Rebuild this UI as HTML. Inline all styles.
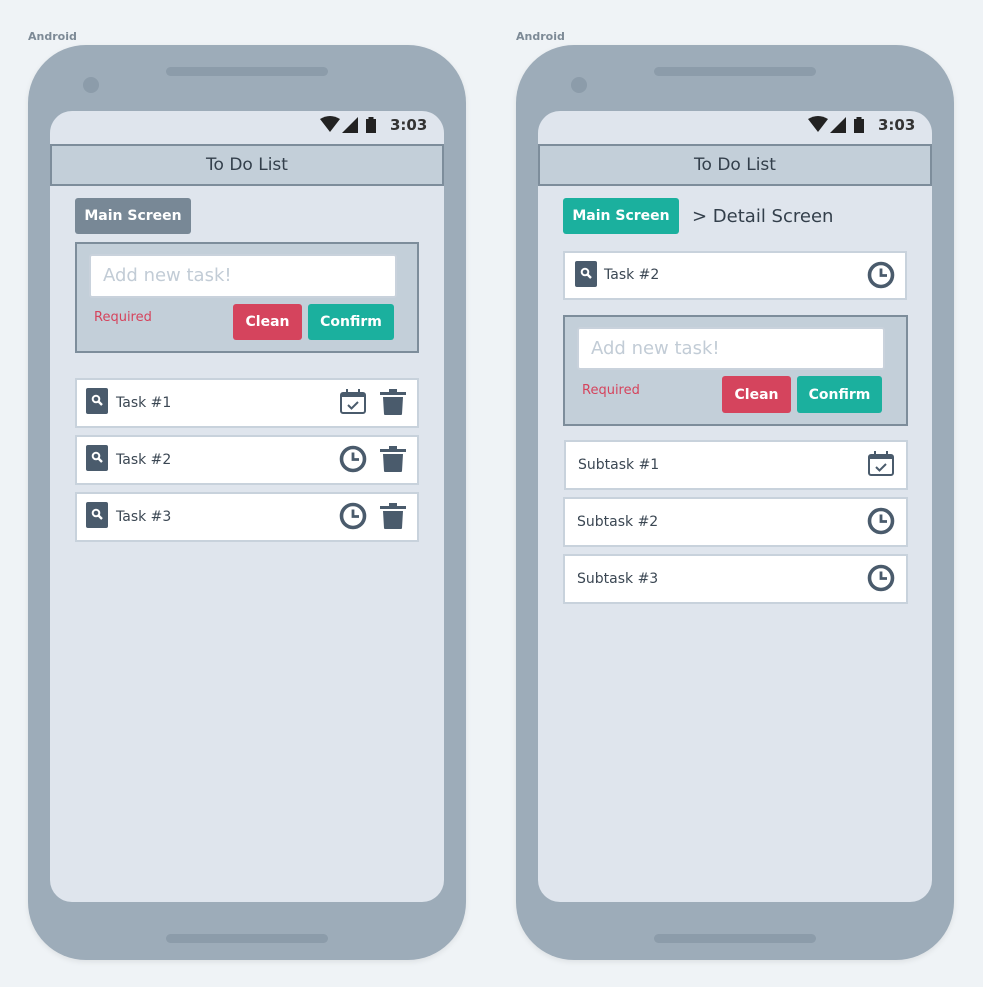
<!DOCTYPE html>
<html><head><meta charset="utf-8"><style>
*{box-sizing:border-box;margin:0;padding:0}
body{width:983px;height:987px;background:#eff3f6;font-family:"DejaVu Sans","Liberation Sans",sans-serif;position:relative;overflow:hidden;color:#3b4753}
.a{position:absolute}
.lbl{font-size:11px;font-weight:bold;color:#7d8a96;top:30px}
.phone{position:absolute;top:45px;width:438px;height:915px;background:#9dacb9;border-radius:58px;box-shadow:0 2px 6px rgba(0,0,0,.08)}
.spk{position:absolute;left:138px;width:162px;height:9px;border-radius:5px;background:#8c9caa}
.cam{position:absolute;left:55px;top:32px;width:16px;height:16px;border-radius:50%;background:#8c9caa}
.scr{position:absolute;left:22px;top:66px;width:394px;height:791px;background:#dfe5ed;border-radius:22px;overflow:hidden}
.hdr{position:absolute;left:0;top:33px;width:394px;height:42px;background:#c3cfd9;border:2px solid #7d8d9b;text-align:center;font-size:17px;line-height:38px;color:#333f4b}
.time{position:absolute;left:340px;top:5px;font-size:15px;font-weight:bold;color:#333}
.btn{position:absolute;color:#fff;font-weight:bold;font-size:14px;text-align:center;border-radius:3px}
.box{position:absolute;background:#c3cfd9;border:2px solid #7d8d9b}
.inp{position:absolute;background:#fff;border:2px solid #c9d2dc;border-radius:3px;font-size:18px;color:#c2ccd6;padding-left:12px;line-height:40px}
.req{position:absolute;color:#d5445d;font-size:13px}
.row{position:absolute;background:#fff;border:2px solid #c8d2dc;font-size:14px;color:#3b4753}
.sq{position:absolute;width:22px;height:26px;background:#4a5b6c;border-radius:2px}
</style></head><body>
<div class="a lbl" style="left:28px">Android</div>
<div class="a lbl" style="left:516px">Android</div>

<div class="phone" style="left:28px">
 <div class="spk" style="top:22px"></div><div class="cam"></div>
 <div class="spk" style="top:889px"></div>
 <div class="scr">
  <svg class="a" style="left:270px;top:5px" width="66" height="18" viewBox="0 0 66 18"><path d="M0 3 Q10-3 20 3 L10 16Z" fill="#222"/><path d="M22 17 L38 1 L38 17Z" fill="#222"/><rect x="46" y="3" width="10" height="14" fill="#222"/><rect x="48.5" y="1" width="5" height="3" fill="#222"/></svg>
  <div class="time">3:03</div>
  <div class="hdr">To Do List</div>
 </div>
</div>
<div class="phone" style="left:516px">
 <div class="spk" style="top:22px"></div><div class="cam"></div>
 <div class="spk" style="top:889px"></div>
 <div class="scr">
  <svg class="a" style="left:270px;top:5px" width="66" height="18" viewBox="0 0 66 18"><path d="M0 3 Q10-3 20 3 L10 16Z" fill="#222"/><path d="M22 17 L38 1 L38 17Z" fill="#222"/><rect x="46" y="3" width="10" height="14" fill="#222"/><rect x="48.5" y="1" width="5" height="3" fill="#222"/></svg>
  <div class="time">3:03</div>
  <div class="hdr">To Do List</div>
 </div>
</div>

<svg width="0" height="0" style="position:absolute"><defs>
<symbol id="mag" viewBox="0 0 22 26"><circle cx="10" cy="11" r="3.3" fill="none" stroke="#fff" stroke-width="2"/><path d="M12.5 13.5 L16 17" stroke="#fff" stroke-width="2.4"/></symbol>
<symbol id="clk" viewBox="0 0 28 28"><circle cx="14" cy="14" r="11.5" fill="none" stroke="#4a5b6c" stroke-width="3.6"/><path d="M14 7.5 V14.5 H20" fill="none" stroke="#4a5b6c" stroke-width="2.8"/></symbol>
<symbol id="cal" viewBox="0 0 28 28"><rect x="2" y="5" width="24" height="20" rx="2" fill="none" stroke="#4a5b6c" stroke-width="2"/><rect x="2" y="5" width="24" height="4" fill="#4a5b6c"/><path d="M8 1v4M20 1v4" stroke="#4a5b6c" stroke-width="2"/><path d="M9 17 L12.5 20.5 L19 14" fill="none" stroke="#4a5b6c" stroke-width="2"/></symbol>
<symbol id="trs" viewBox="0 0 28 28"><rect x="1" y="4" width="26" height="3" fill="#4a5b6c"/><rect x="10" y="1" width="8" height="4" fill="#4a5b6c"/><path d="M4 9 H24 L23 26 Q23 27 22 27 H6 Q5 27 5 26Z" fill="#4a5b6c"/></symbol>
</defs></svg>

<div class="btn" style="left:75px;top:198px;width:116px;height:36px;line-height:37px;background:#788896">Main Screen</div>
<div class="box" style="left:75px;top:242px;width:344px;height:111px"></div>
<div class="inp" style="left:89px;top:254px;width:308px;height:44px">Add new task!</div>
<div class="req" style="left:94px;top:310px">Required</div>
<div class="btn" style="left:233px;top:304px;width:69px;height:36px;line-height:37px;background:#d5445d">Clean</div>
<div class="btn" style="left:308px;top:304px;width:86px;height:36px;line-height:37px;background:#1bb09e">Confirm</div>

<div class="row" style="left:75px;top:378px;width:344px;height:50px"><div class="sq" style="left:9px;top:8px"><svg width="22" height="26"><use href="#mag"/></svg></div><span class="a" style="left:39px;top:15px">Task #1</span><svg class="a" style="left:262px;top:8px" width="28" height="28"><use href="#cal"/></svg><svg class="a" style="left:302px;top:8px" width="28" height="28"><use href="#trs"/></svg></div>
<div class="row" style="left:75px;top:435px;width:344px;height:50px"><div class="sq" style="left:9px;top:8px"><svg width="22" height="26"><use href="#mag"/></svg></div><span class="a" style="left:39px;top:15px">Task #2</span><svg class="a" style="left:262px;top:8px" width="28" height="28"><use href="#clk"/></svg><svg class="a" style="left:302px;top:8px" width="28" height="28"><use href="#trs"/></svg></div>
<div class="row" style="left:75px;top:492px;width:344px;height:50px"><div class="sq" style="left:9px;top:8px"><svg width="22" height="26"><use href="#mag"/></svg></div><span class="a" style="left:39px;top:15px">Task #3</span><svg class="a" style="left:262px;top:8px" width="28" height="28"><use href="#clk"/></svg><svg class="a" style="left:302px;top:8px" width="28" height="28"><use href="#trs"/></svg></div>

<div class="btn" style="left:563px;top:198px;width:116px;height:36px;line-height:37px;background:#1bb09e">Main Screen</div>
<div class="a" style="left:692px;top:206px;font-size:18px;color:#333f4b">&gt; Detail Screen</div>
<div class="row" style="left:563px;top:251px;width:344px;height:49px"><div class="sq" style="left:10px;top:8px"><svg width="22" height="26"><use href="#mag"/></svg></div><span class="a" style="left:39px;top:14px">Task #2</span><svg class="a" style="left:302px;top:8px" width="28" height="28"><use href="#clk"/></svg></div>
<div class="box" style="left:563px;top:315px;width:345px;height:111px"></div>
<div class="inp" style="left:577px;top:327px;width:308px;height:43px">Add new task!</div>
<div class="req" style="left:582px;top:383px">Required</div>
<div class="btn" style="left:722px;top:376px;width:69px;height:37px;line-height:38px;background:#d5445d">Clean</div>
<div class="btn" style="left:797px;top:376px;width:85px;height:37px;line-height:38px;background:#1bb09e">Confirm</div>

<div class="row" style="left:564px;top:440px;width:344px;height:50px"><span class="a" style="left:12px;top:15px">Subtask #1</span><svg class="a" style="left:301px;top:8px" width="28" height="28"><use href="#cal"/></svg></div>
<div class="row" style="left:563px;top:497px;width:345px;height:50px"><span class="a" style="left:12px;top:15px">Subtask #2</span><svg class="a" style="left:302px;top:8px" width="28" height="28"><use href="#clk"/></svg></div>
<div class="row" style="left:563px;top:554px;width:345px;height:50px"><span class="a" style="left:12px;top:15px">Subtask #3</span><svg class="a" style="left:302px;top:8px" width="28" height="28"><use href="#clk"/></svg></div>
</body></html>
